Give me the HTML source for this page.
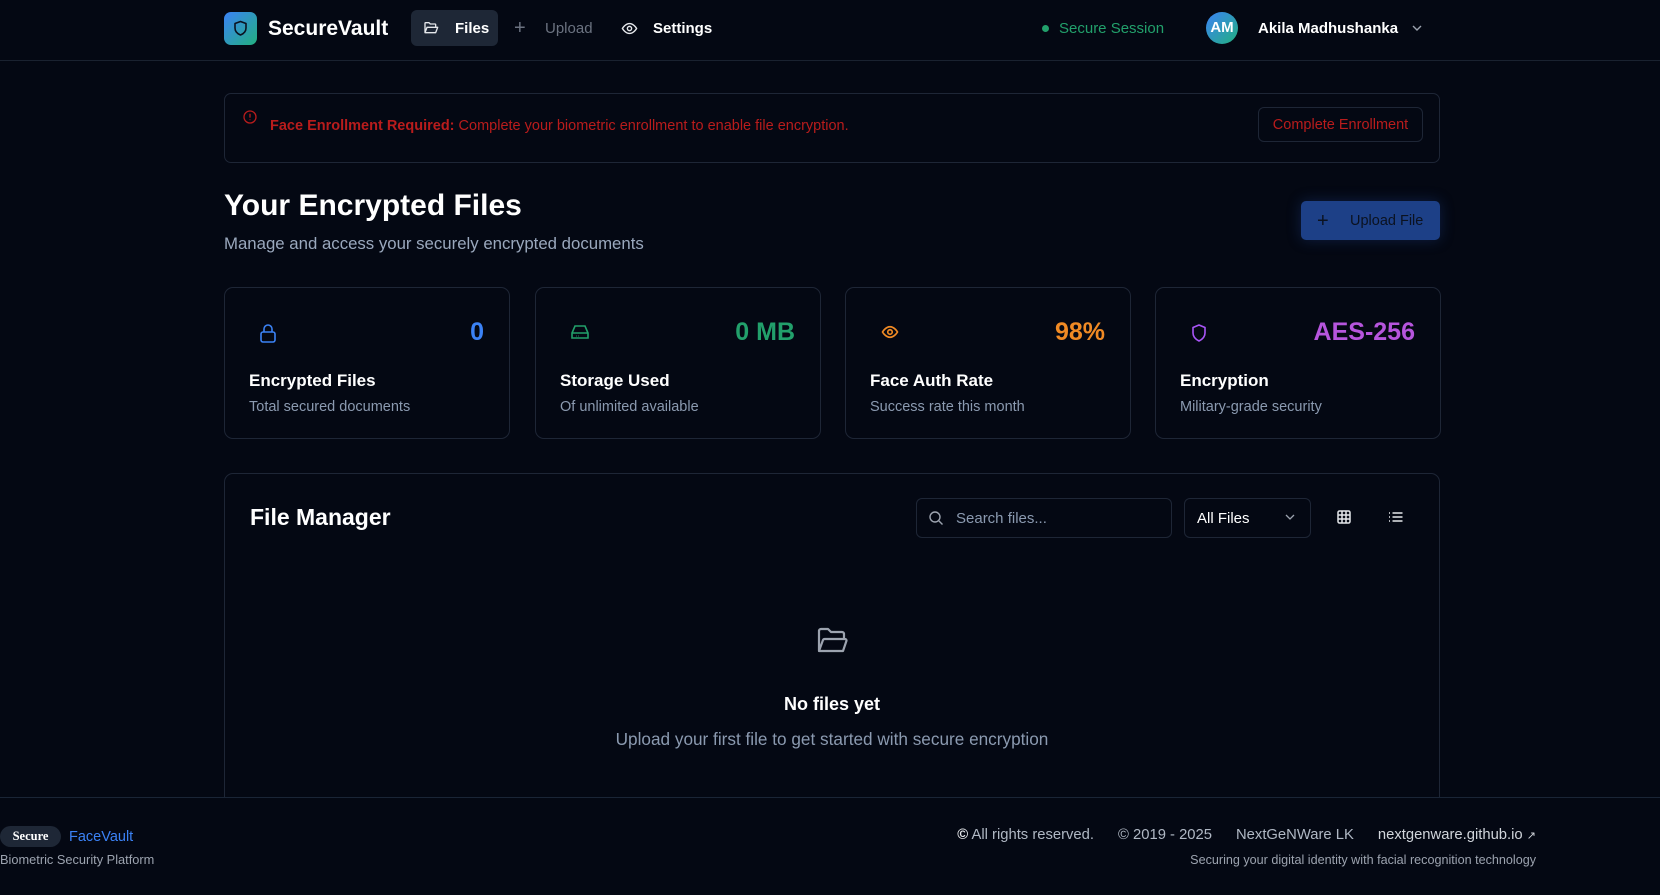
<!DOCTYPE html>
<html><head><meta charset="utf-8"><style>
*{box-sizing:border-box;margin:0;padding:0}
body{width:1660px;height:895px;overflow:hidden;background:#040813;font-family:"Liberation Sans",sans-serif;color:#fff;position:relative}
.abs{position:absolute}
.hdr{left:0;top:0;width:1660px;height:61px;border-bottom:1px solid #1a2230}
svg{display:block}
.card{top:287px;width:286px;height:152px;border:1px solid #1e2636;border-radius:9px}
.card .v{position:absolute;right:25px;top:30px;font-size:25px;font-weight:bold}
.card .t{position:absolute;left:24px;top:83px;font-size:17px;font-weight:bold}
.card .s{position:absolute;left:24px;top:111px;font-size:14.5px;color:#8b9ab0}
.card svg{position:absolute;left:34px;top:35px}
</style></head><body>
<div class="abs hdr"></div>
<div class="abs" style="left:224px;top:12px;width:33px;height:33px;border-radius:7px;background:linear-gradient(135deg,#3b82f6,#22b07f)">
<svg width="33" height="33" viewBox="0 0 33 33"><path d="M16.5 9.5l5.5 2v4.5c0 3.5-2.5 5.8-5.5 7-3-1.2-5.5-3.5-5.5-7v-4.5z" fill="none" stroke="#0b1220" stroke-width="1.6" stroke-linejoin="round"/></svg></div>
<div class="abs" style="left:268px;top:17px;font-size:21px;font-weight:bold">SecureVault</div>
<div class="abs" style="left:411px;top:10px;width:87px;height:36px;border-radius:6px;background:#1e2736"></div>
<svg class="abs" style="left:423px;top:20px" width="16" height="16" viewBox="0 0 24 24" fill="none" stroke="#e5e7eb" stroke-width="2" stroke-linejoin="round"><path d="M3 19V5a1 1 0 011-1h5l2 2h7a1 1 0 011 1v3M3 19l3-8h16l-3 8z"/></svg>
<div class="abs" style="left:455px;top:20px;font-size:15px;font-weight:bold">Files</div>
<div class="abs" style="left:514px;top:17px;font-size:20px;color:#6b7280">+</div>
<div class="abs" style="left:545px;top:20px;font-size:15px;color:#6b7280">Upload</div>
<svg class="abs" style="left:621px;top:20px" width="17" height="17" viewBox="0 0 24 24" fill="none" stroke="#e5e7eb" stroke-width="2"><path d="M2 12s4-7 10-7 10 7 10 7-4 7-10 7S2 12 2 12z"/><circle cx="12" cy="12" r="3"/></svg>
<div class="abs" style="left:653px;top:20px;font-size:15px;font-weight:bold">Settings</div>
<div class="abs" style="left:1042px;top:25px;width:7px;height:7px;border-radius:50%;background:#22a06b"></div>
<div class="abs" style="left:1059px;top:20px;font-size:15px;color:#22a06b">Secure Session</div>
<div class="abs" style="left:1206px;top:12px;width:32px;height:32px;border-radius:50%;background:linear-gradient(135deg,#3b82f6,#22b07f);font-size:15px;font-weight:bold;text-align:center;line-height:32px">AM</div>
<div class="abs" style="left:1258px;top:20px;font-size:15px;font-weight:bold">Akila Madhushanka</div>
<svg class="abs" style="left:1410px;top:22px" width="14" height="12" viewBox="0 0 14 12" fill="none" stroke="#9ca3af" stroke-width="1.4"><path d="M3 4l4 4 4-4"/></svg>

<div class="abs" style="left:224px;top:93px;width:1216px;height:70px;border:1px solid #1e2636;border-radius:7px"></div>
<svg class="abs" style="left:243px;top:110px" width="14" height="14" viewBox="0 0 14 14" fill="none" stroke="#b91c1c" stroke-width="1.3"><circle cx="7" cy="7" r="6"/><path d="M7 3.8v3.8M7 9.5v.6"/></svg>
<div class="abs" style="left:270px;top:118px;font-size:14.5px;color:#b91c1c"><b>Face Enrollment Required:</b> Complete your biometric enrollment to enable file encryption.</div>
<div class="abs" style="left:1258px;top:107px;width:165px;height:35px;border:1px solid #1e2636;border-radius:6px;font-size:14.5px;color:#b91c1c;text-align:center;line-height:35px">Complete Enrollment</div>

<div class="abs" style="left:224px;top:189px;font-size:30px;font-weight:bold">Your Encrypted Files</div>
<div class="abs" style="left:224px;top:234px;font-size:16.8px;color:#9aa8bd">Manage and access your securely encrypted documents</div>
<div class="abs" style="left:1301px;top:201px;width:139px;height:39px;border-radius:5px;background:#1d4087;box-shadow:0 0 14px rgba(30,64,140,.4);font-size:14.5px;color:#0b1220;line-height:41px"><span style="position:absolute;left:16px;font-size:20px;top:0px">+</span><span style="position:absolute;left:49px">Upload File</span></div>

<div class="abs card" style="left:224px"><svg width="18" height="20" viewBox="0 0 18 20" fill="none" stroke="#3b82f6" stroke-width="1.6"><rect x="2" y="9" width="14" height="10" rx="2"/><path d="M5 9V6a4 4 0 018 0v3"/></svg><div class="v" style="color:#3b82f6">0</div><div class="t">Encrypted Files</div><div class="s">Total secured documents</div></div>
<div class="abs card" style="left:535px"><svg width="20" height="18" viewBox="0 0 20 18" fill="none" stroke="#22a06b" stroke-width="1.6"><path d="M2 10l3-7h10l3 7v5H2zM2 10h16"/><path d="M6 13h.5M8.5 13h.5"/></svg><div class="v" style="color:#22a06b">0 MB</div><div class="t">Storage Used</div><div class="s">Of unlimited available</div></div>
<div class="abs card" style="left:845px"><svg width="20" height="18" viewBox="0 0 24 24" fill="none" stroke="#f08a24" stroke-width="2.2"><path d="M2 12s4-7 10-7 10 7 10 7-4 7-10 7S2 12 2 12z"/><circle cx="12" cy="12" r="3"/></svg><div class="v" style="color:#f08a24">98%</div><div class="t">Face Auth Rate</div><div class="s">Success rate this month</div></div>
<div class="abs card" style="left:1155px"><svg width="18" height="20" viewBox="0 0 18 20" fill="none" stroke="#a855f7" stroke-width="1.6"><path d="M9 2l6 2.5v5.5c0 4-3 6.5-6 8-3-1.5-6-4-6-8V4.5z" stroke-linejoin="round"/></svg><div class="v" style="color:#b655dd">AES-256</div><div class="t">Encryption</div><div class="s">Military-grade security</div></div>

<div class="abs" style="left:224px;top:473px;width:1216px;height:400px;border:1px solid #1e2636;border-radius:9px"></div>
<div class="abs" style="left:250px;top:504px;font-size:23px;font-weight:bold">File Manager</div>
<div class="abs" style="left:916px;top:498px;width:256px;height:40px;border:1px solid #1e2636;border-radius:6px"></div>
<svg class="abs" style="left:928px;top:510px" width="16" height="16" viewBox="0 0 16 16" fill="none" stroke="#9ca3af" stroke-width="1.4"><circle cx="7" cy="7" r="5"/><path d="M11 11l3.5 3.5"/></svg>
<div class="abs" style="left:956px;top:510px;font-size:15px;color:#8b9ab0">Search files...</div>
<div class="abs" style="left:1184px;top:498px;width:127px;height:40px;border:1px solid #1e2636;border-radius:6px"></div>
<div class="abs" style="left:1197px;top:510px;font-size:15px">All Files</div>
<svg class="abs" style="left:1284px;top:512px" width="12" height="10" viewBox="0 0 12 10" fill="none" stroke="#9ca3af" stroke-width="1.3"><path d="M2 3l4 4 4-4"/></svg>
<svg class="abs" style="left:1337px;top:510px" width="14" height="14" viewBox="0 0 14 14" fill="none" stroke="#e5e7eb" stroke-width="1.5"><rect x="1" y="1" width="12" height="12" rx="1.5"/><path d="M5 1v12M9 1v12M1 5h12M1 9h12"/></svg>
<svg class="abs" style="left:1388px;top:511px" width="15" height="12" viewBox="0 0 15 12" fill="none" stroke="#e5e7eb" stroke-width="1.5"><path d="M1 2h1M1 6h1M1 10h1M4.5 2h10M4.5 6h10M4.5 10h10"/></svg>
<svg class="abs" style="left:817px;top:627px" width="31" height="28" viewBox="0 0 31 28" fill="none" stroke="#9ca3af" stroke-width="2.2" stroke-linejoin="round"><path d="M2 24V4a2 2 0 012-2h7l3 3h11a2 2 0 012 2v4M2 24l4-11a2 2 0 012-1h20a1.5 1.5 0 011.4 2L26 24z"/></svg>
<div class="abs" style="left:0;width:1664px;top:694px;text-align:center;font-size:18px;font-weight:bold">No files yet</div>
<div class="abs" style="left:0;width:1664px;top:729px;text-align:center;font-size:17.2px;color:#8b9ab0">Upload your first file to get started with secure encryption</div>

<div class="abs" style="left:0;top:797px;width:1660px;height:98px;background:#040813;border-top:1px solid #1a2536"></div>
<div class="abs" style="left:0;top:826px;width:61px;height:21px;border-radius:11px;background:#1e2736;font-family:'Liberation Serif',serif;font-size:12.5px;font-weight:bold;text-align:center;line-height:21px">Secure</div>
<div class="abs" style="left:69px;top:829px;font-size:14.5px;color:#3b82f6">FaceVault</div>
<div class="abs" style="left:0;top:852px;font-size:12.8px;color:#9ca3af">Biometric Security Platform</div>
<div class="abs" style="right:124px;top:827px;font-size:14.8px;color:#b0b8c4;white-space:nowrap"><b style="color:#e5e7eb">©</b> All rights reserved.<span style="display:inline-block;width:24px"></span>© 2019 - 2025<span style="display:inline-block;width:24px"></span>NextGeNWare LK<span style="display:inline-block;width:24px"></span><span style="color:#d1d5db">nextgenware.github.io <span style="font-size:11px">↗</span></span></div>
<div class="abs" style="right:124px;top:853px;font-size:12.6px;color:#9ca3af">Securing your digital identity with facial recognition technology</div>
</body></html>
